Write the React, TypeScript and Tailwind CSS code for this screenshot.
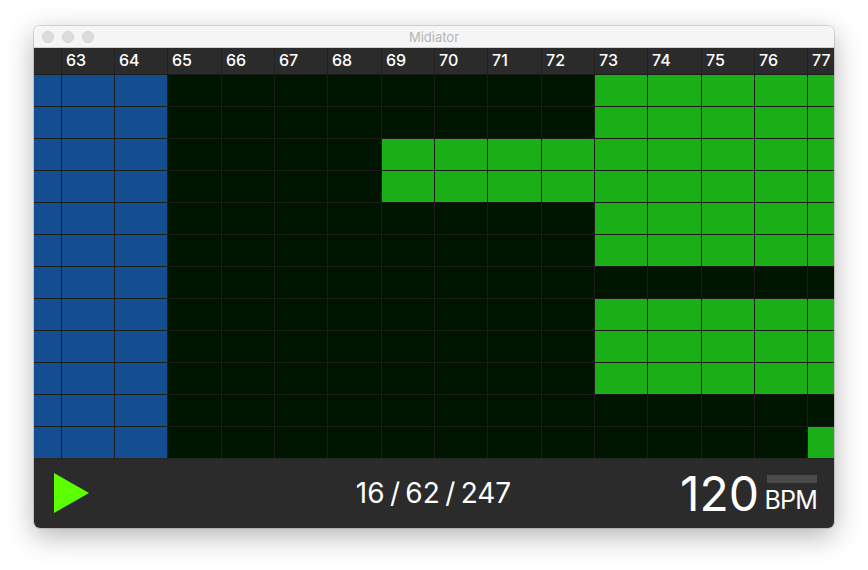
// Midiator window: note grid with a transport footer.
const columns = [62, 63, 64, 65, 66, 67, 68, 69, 70, 71, 72, 73, 74, 75, 76, 77];

const gridCols =
  "grid-cols-[27px_52px_52px_53px_52px_52px_53px_52px_52px_53px_52px_52px_53px_52px_52px_26px]";

// Rows of active notes on the green side of the grid.
const fullRows = [0, 1, 2, 3, 4, 5, 7, 8, 9];

const cellColor = (row: number, note: number) => {
  if (note <= 64) return "bg-[#144e90]";
  if (note >= 73 && fullRows.includes(row)) return "bg-[#1aaf17]";
  if (note >= 69 && note <= 72 && (row === 2 || row === 3)) return "bg-[#1aaf17]";
  if (note === 77 && row === 11) return "bg-[#1aaf17]";
  return "bg-[#001500]";
};

function TrafficLight() {
  return <span className="h-3 w-3 rounded-full border border-[#d2d2d2] bg-[#dcdcdc]" />;
}

function TitleBar() {
  return (
    <div className="relative flex h-[22px] items-center gap-2 border-b border-[#d0d0d0] bg-[#f5f5f5] pl-2">
      <TrafficLight />
      <TrafficLight />
      <TrafficLight />
      <span className="absolute inset-x-0 mt-0.5 text-center text-[13px] text-[#b4b4b4]">Midiator</span>
    </div>
  );
}

function Header() {
  return (
    <div className={`grid h-[26px] gap-x-px bg-[#222222] ${gridCols}`}>
      {columns.map((note, i) => (
        <div
          key={note}
          className="flex items-center overflow-hidden bg-[#2b2b2b] pb-0.5 pl-1 text-[16px] font-medium text-white"
        >
          {i > 0 ? note : ""}
        </div>
      ))}
    </div>
  );
}

function NoteGrid() {
  return (
    <div className={`grid auto-rows-[31px] gap-px bg-[#1c1c1c] pt-px ${gridCols}`}>
      {Array.from({ length: 12 }).map((_, row) =>
        columns.map((note) => <div key={`${row}-${note}`} className={cellColor(row, note)} />)
      )}
    </div>
  );
}

function Footer() {
  return (
    <div className="grid h-[70px] grid-cols-3 items-center border-t border-[#262626] bg-[#2b2b2b] pl-5 pr-[17px] text-white">
      <svg width="35" height="40" viewBox="0 0 35 40" className="mb-px">
        <polygon points="0,0 35,20 0,40" fill="#5bff00" />
      </svg>
      <div className="mb-0.5 whitespace-nowrap pr-1 text-center text-[28px] [word-spacing:-2.5px]">16 / 62 / 247</div>
      <div className="flex items-center justify-end gap-1.5">
        <span className="text-[48px] font-normal leading-none">120</span>
        <div className="flex w-[52px] flex-col items-end gap-[5px]">
          <div className="h-2 w-[50px] bg-[#4a4a4a]" />
          <span className="text-[25px] leading-none tracking-[-0.8px]">BPM</span>
        </div>
      </div>
    </div>
  );
}

export default function App() {
  return (
    <div className="h-[570px] w-[868px] overflow-hidden bg-white pl-[34px] pt-[26px] font-['Inter',sans-serif]">
      <div className="h-[502px] w-[800px] overflow-hidden rounded-md shadow-[0_0_0_1px_rgba(0,0,0,0.12),0_8px_28px_rgba(0,0,0,0.3)]">
        <TitleBar />
        <Header />
        <NoteGrid />
        <Footer />
      </div>
    </div>
  );
}
